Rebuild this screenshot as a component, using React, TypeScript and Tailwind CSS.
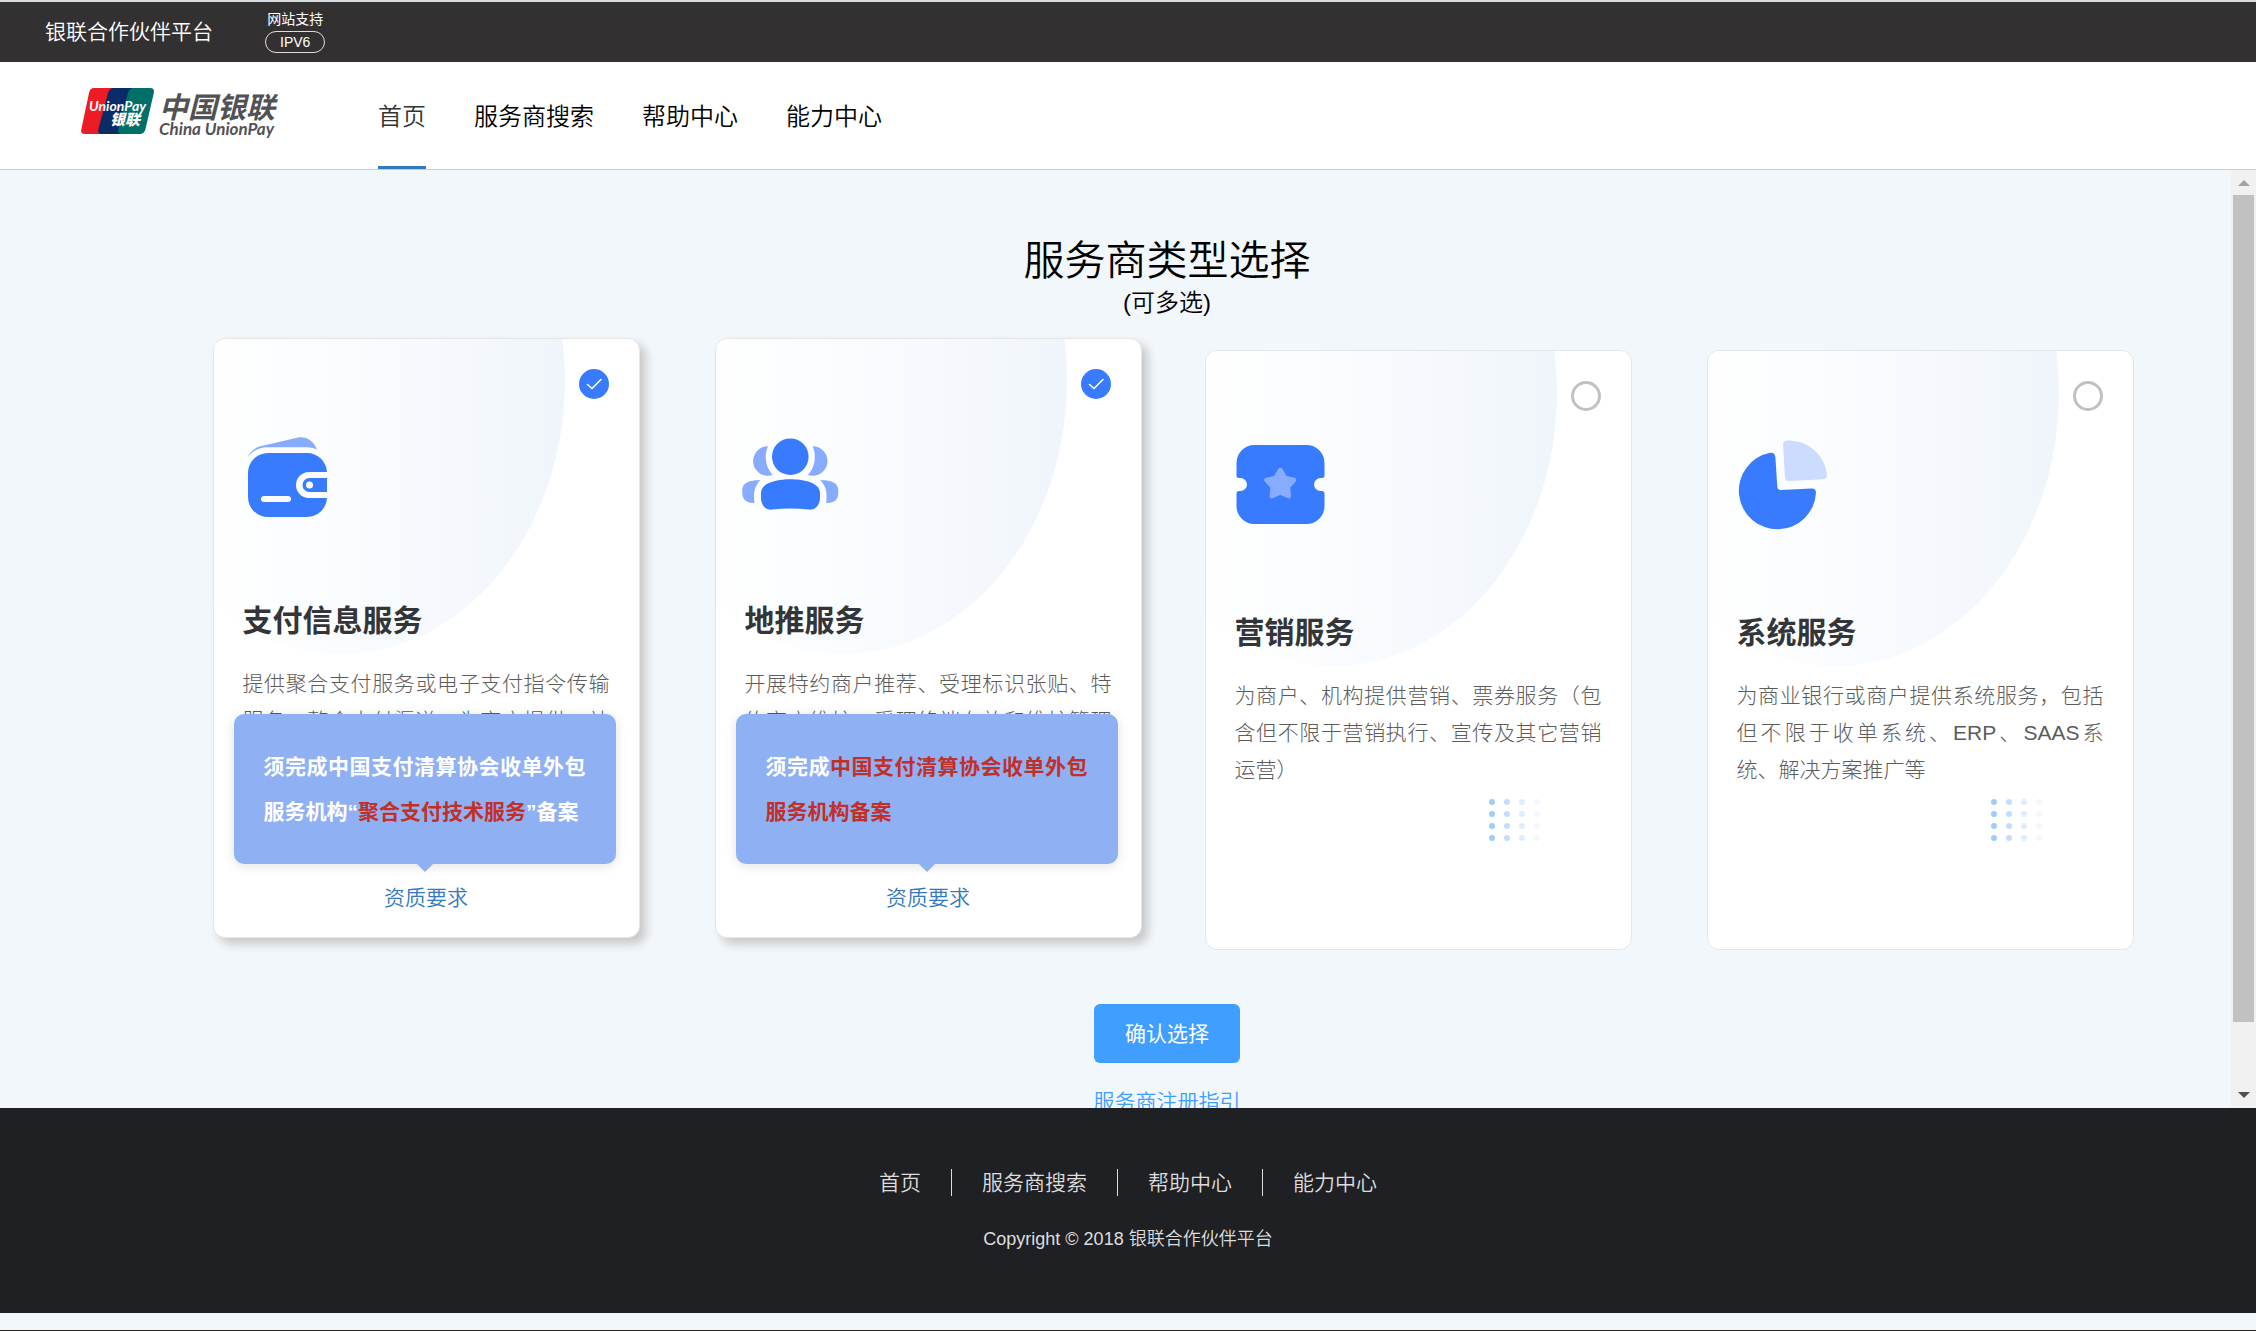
import { useState, type ReactNode } from 'react';
import clsx from 'clsx';

const navItems = ['首页', '服务商搜索', '帮助中心', '能力中心'];

const WalletIcon = () => (
  <svg viewBox="0 0 100 100" className="size-25" aria-hidden="true">
    <path d="M9.5 34.5C12 29 17 24.5 23.5 23L59 14.7C68 13 75.500 17.500 79 26.500Q75 24.500 70.500 24.300H29C21 24.300 14.500 28 9.500 34.500Z" fill="#87acff" />
    <path d="M30 30H69A20 20 0 0 1 89 49H71A13 13 0 0 0 71 75H89A20 20 0 0 1 69 94H30A20 20 0 0 1 10 74V50A20 20 0 0 1 30 30Z" fill="#387bff" />
    <path d="M89 55H71.500A7 7 0 0 0 71.500 69H89Z" fill="#387bff" />
    <circle cx="71.5" cy="62" r="3.5" fill="#fff" />
    <rect x="23" y="73" width="30" height="6" rx="3" fill="#fff" />
  </svg>
);

const PeopleIcon = () => (
  <svg viewBox="0 0 100 100" className="size-25" aria-hidden="true">
    <g fill="#87acff">
      <path d="M28 23.200A14.800 14.800 0 1 0 32.700 52C26 45 23.500 33 28 23.200Z" />
      <path d="M20.500 57C14.500 63 13 70 14.500 80C6 80.500 2.300 76 2.300 70C2 62 4 57.500 20.500 57Z" />
    </g>
    <g fill="#87acff" transform="translate(100.6 0) scale(-1 1)">
      <path d="M28 23.200A14.800 14.800 0 1 0 32.700 52C26 45 23.500 33 28 23.200Z" />
      <path d="M20.500 57C14.500 63 13 70 14.500 80C6 80.500 2.300 76 2.300 70C2 62 4 57.500 20.500 57Z" />
    </g>
    <circle cx="50.3" cy="33.700" r="18.300" fill="#387bff" />
    <path d="M50.500 56.300C62 56.300 80 59 80 70V75C80 82 75 87.500 69 86.600C57 85 44 85 32 86.600C26 87.500 21 82 21 75V70C21 59 39 56.300 50.500 56.300Z" fill="#387bff" />
  </svg>
);

const TicketIcon = () => (
  <svg viewBox="0 0 100 100" className="size-25" aria-hidden="true">
    <path d="M24.500 10H76.500A18 18 0 0 1 94.500 28V40.500Q94.500 43 92 43H90.500A6.500 6.500 0 0 0 90.500 56H92Q94.500 56 94.500 58.500V71A18 18 0 0 1 76.500 89H24.500A18 18 0 0 1 6.500 71V58.500Q6.500 56 9 56H10.500A6.500 6.500 0 0 0 10.500 43H9Q6.500 43 6.500 40.500V28A18 18 0 0 1 24.500 10Z" fill="#387bff" />
    <path d="M50.300 35L55 43L64.100 45L57.900 52L58.800 61.200L50.300 57.500L41.800 61.200L42.700 52L36.500 45L45.600 43Z" fill="#87acff" stroke="#87acff" strokeWidth="4.500" strokeLinejoin="round" />
  </svg>
);

const PieIcon = () => (
  <svg viewBox="0 0 100 100" className="size-25" aria-hidden="true">
    <path d="M38 17.800A38.600 38.600 0 1 0 84 57.500Q84 53.300 79.500 53.400L49 55Q45.500 55.100 45.300 51.500L43.400 22.500Q43 17 38 17.800Z" fill="#387bff" />
    <path d="M55 5.600C76 5 93 20 95 40Q95.200 44 91 44.200L57.500 46Q53.300 46.200 53 42L51.100 10Q51 5.800 55 5.600Z" fill="#cbdcff" />
  </svg>
);

const dotColors = ['#a0cbfa', '#c3defc', '#dfedfd', '#f2f8fe'];

const Dots = () => (
  <svg viewBox="0 0 52 42" className="absolute left-[283px] top-[448px] w-[52px] h-[42px]" aria-hidden="true">
    {dotColors.map((color, col) =>
      [3, 15, 27, 39].map(y => <circle key={y} cx={3 + col * 15} cy={y} r="3" fill={color} />)
    )}
  </svg>
);

const Logo = () => (
  <svg viewBox="0 0 220 60" className="w-[220px] h-[60px]" role="img" aria-label="中国银联 China UnionPay">
    <path d="M13 0H35L23 46H4Q-1 46 .4 41L8 5Q9 0 13 0Z" fill="#ed1b23" />
    <path d="M33 0H55L44 46H21Q16 46 17.400 41L27 5Q28.500 0 33 0Z" fill="#0a2c66" />
    <path d="M53 0H69Q74 0 72.800 5L64.500 41Q63.300 46 59 46H41Q36 46 37.400 41L47 5Q48.500 0 53 0Z" fill="#006f68" />
    <text x="8" y="23" fontSize="14" fontWeight="700" fontStyle="italic" fill="#fff" fontFamily='Lato, "Open Sans", sans-serif'>UnionPay</text>
    <text x="29" y="37" fontSize="15" fontWeight="900" fontStyle="italic" fill="#fff" fontFamily='"Noto Sans CJK SC", sans-serif'>银联</text>
    <text x="78" y="30" fontSize="29" fontWeight="700" fontStyle="italic" fill="#525254" fontFamily='"Noto Sans CJK SC", sans-serif'>中国银联</text>
    <text x="78" y="47" fontSize="17" fontWeight="700" fontStyle="italic" fill="#525254" fontFamily='Lato, "Open Sans", sans-serif'>China UnionPay</text>
  </svg>
);

type Service = {
  title: string;
  desc: string;
  icon: () => ReactNode;
  tip?: ReactNode;
};

const services: Service[] = [
  {
    title: '支付信息服务',
    desc: '提供聚合支付服务或电子支付指令传输服务，整合支付渠道，为商户提供一站式支付服务',
    icon: WalletIcon,
    tip: <>须完成中国支付清算协会收单外包服务机构“<span className="text-[#c03028]">聚合支付技术服务</span>”备案</>,
  },
  {
    title: '地推服务',
    desc: '开展特约商户推荐、受理标识张贴、特约商户维护、受理终端布放和维护管理等服务',
    icon: PeopleIcon,
    tip: <>须完成<span className="text-[#c03028]">中国支付清算协会收单外包服务机构备案</span></>,
  },
  {
    title: '营销服务',
    desc: '为商户、机构提供营销、票券服务（包含但不限于营销执行、宣传及其它营销运营）',
    icon: TicketIcon,
  },
  {
    title: '系统服务',
    desc: '为商业银行或商户提供系统服务，包括但不限于收单系统、ERP、SAAS系统、解决方案推广等',
    icon: PieIcon,
  },
];

const ServiceCard = ({ service, checked, onToggle }: { service: Service; checked: boolean; onToggle: () => void }) => (
  <article
    className={clsx(
      'relative flex min-h-[600px] max-w-[427px] flex-1 flex-col rounded-xl border border-[#e6e6e6] bg-white',
      checked && 'translate-x-3 -translate-y-3 shadow-[6px_6px_10px_#c8c8c8]'
    )}
  >
    <div className="absolute inset-0 overflow-hidden rounded-xl">
      <div className="absolute -left-[97px] -top-[233px] h-[548px] w-[448px] rounded-[50%] bg-linear-to-r from-white from-20% via-[#f8fbfe] via-60% to-[#f0f5fb]" />
      <Dots />
    </div>
    <label className="relative flex flex-col">
      <input
        type="checkbox"
        checked={checked}
        onChange={onToggle}
        className="peer absolute right-[30px] top-[30px] size-[30px] appearance-none rounded-full border-3 border-[#c0c0c6] checked:border-[#387bff] checked:bg-[#387bff]"
      />
      <svg viewBox="0 0 30 30" className="pointer-events-none absolute right-[30px] top-[30px] hidden size-[30px] peer-checked:block" aria-hidden="true">
        <path d="M8.500 15.500L13 19.500L22 10.500" fill="none" stroke="#fff" strokeWidth="1.600" strokeLinecap="round" strokeLinejoin="round" />
      </svg>
      <span className="px-6 pt-[84px]"><service.icon /></span>
      <span className="mt-[78px] px-[29px] text-[30px] leading-10 font-bold text-[#333538]">{service.title}</span>
    </label>
    <p className="relative mt-6 px-[29px] text-justify text-[21px] leading-[37px] font-light text-[#5c5c5c]">{service.desc}</p>
    {service.tip && (
      <>
        <div role="tooltip" className="absolute bottom-[73px] left-5 right-[23px] rounded-[10px] bg-[#8fb0f3] p-[30px] text-justify text-[21px] leading-[45px] font-bold text-white shadow-[0_2px_12px_rgba(0,0,0,0.12)]">
          {service.tip}
          <span className="absolute left-1/2 top-full -translate-x-1/2 border-x-8 border-t-8 border-x-transparent border-t-[#8fb0f3]" />
        </div>
        <a href="#" className="relative mt-auto mb-[23px] self-center text-[21px] leading-8 font-[350] text-[#3478c0]">资质要求</a>
      </>
    )}
  </article>
);

const Scrollbar = () => (
  <div className="flex w-[25px] shrink-0 flex-col items-center bg-[#f1f1f1] py-2.5" aria-hidden="true">
    <span className="border-x-6 border-b-6 border-x-transparent border-b-[#a3a3a3]" />
    <span className="mt-[9px] mb-[70px] w-[21px] flex-1 bg-[#c1c1c1]" />
    <span className="border-x-6 border-t-6 border-x-transparent border-t-[#505050]" />
  </div>
);

export default function App() {
  const [selected, setSelected] = useState(['支付信息服务', '地推服务']);

  const toggle = (title: string) => {
    setSelected(prev => (prev.includes(title) ? prev.filter(t => t !== title) : [...prev, title]));
  };

  return (
    <div className="flex h-screen flex-col border-b border-[#222] bg-[#f2f7fb] font-['Liberation_Sans','Noto_Sans_CJK_SC',sans-serif]">
      <div className="flex h-[62px] shrink-0 items-center gap-[52px] border-t-2 border-[#d5dbdf] bg-[#333031] px-[45px] text-white">
        <span className="text-[21px] leading-8 font-[350]">银联合作伙伴平台</span>
        <div className="flex flex-col items-center gap-0.5 pb-0.5 text-sm">
          <span>网站支持</span>
          <span className="rounded-full border border-[#ddd] px-3.5">IPV6</span>
        </div>
      </div>

      <header className="flex h-[108px] shrink-0 items-stretch border-b border-[#ccc] bg-white pl-[81px]">
        <a href="#" className="mr-[77px] pt-[26px]"><Logo /></a>
        <nav className="flex gap-12 text-2xl font-[350] text-black">
          {navItems.map((item, i) => (
            <a
              key={item}
              href="#"
              className={clsx('flex items-center border-b-3 pt-[5px]', i === 0 ? 'border-[#3478c0] text-[#333]' : 'border-transparent')}
            >
              {item}
            </a>
          ))}
        </nav>
      </header>

      <div className="flex min-h-0 flex-1">
        <main className="flex flex-1 flex-col items-center overflow-hidden pt-[65px] pl-[103px]">
          <h1 className="text-[41px] leading-[52px] font-[350] text-black">服务商类型选择</h1>
          <p className="text-2xl leading-8 font-[350] text-black">(可多选)</p>
          <div className="mt-[31px] flex w-full justify-center gap-[75px]">
            {services.map(service => (
              <ServiceCard
                key={service.title}
                service={service}
                checked={selected.includes(service.title)}
                onToggle={() => toggle(service.title)}
              />
            ))}
          </div>
          <button type="button" className="mt-[54px] h-[59px] shrink-0 rounded-md bg-[#409eff] px-[31px] text-[21px] text-white">确认选择</button>
          <a href="#" className="mt-[23px] text-[21px] leading-8 font-[350] text-[#409eff]">服务商注册指引</a>
        </main>
        <Scrollbar />
      </div>

      <footer className="mb-[17px] flex h-[205px] shrink-0 flex-col items-center bg-[#1f2023] pt-[61px] text-[#ddd]">
        <nav className="flex divide-x divide-[#ddd] text-[21px] leading-[27px] font-[350]">
          {navItems.map(item => (
            <a key={item} href="#" className="px-[30px]">{item}</a>
          ))}
        </nav>
        <p className="mt-[29px] text-lg font-[350]">Copyright © 2018 银联合作伙伴平台</p>
      </footer>
    </div>
  );
}
